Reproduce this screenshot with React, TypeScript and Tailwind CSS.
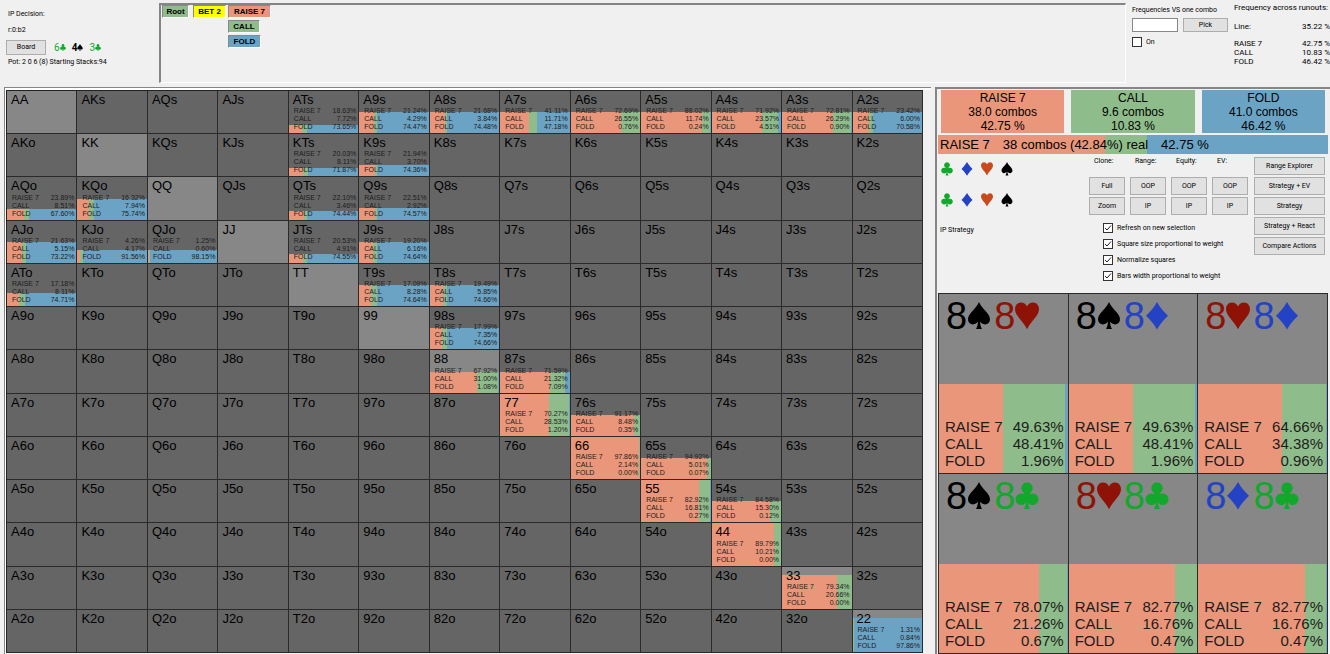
import React, { useState } from 'react';
import clsx from 'clsx';

type Suit = 'club' | 'diamond' | 'heart' | 'spade';

interface Strategy {
  // share of the square that is filled, in percent
  weight: number;
  raise: string;
  call: string;
  fold: string;
}

interface Combo {
  cards: Suit[];
  strategy: Strategy;
}

const RANKS = ['A', 'K', 'Q', 'J', 'T', '9', '8', '7', '6', '5', '4', '3', '2'];

const s = (weight: number, raise: string, call: string, fold: string): Strategy => ({ weight, raise, call, fold });

const STRATEGIES: Record<string, Strategy> = {
  ATs: s(20, '18.63', '7.72', '73.65'),
  A9s: s(50, '21.24', '4.29', '74.47'),
  A8s: s(50, '21.68', '3.84', '74.48'),
  A7s: s(50, '41.11', '11.71', '47.18'),
  A6s: s(50, '72.69', '26.55', '0.76'),
  A5s: s(50, '88.02', '11.74', '0.24'),
  A4s: s(50, '71.92', '23.57', '4.51'),
  A3s: s(50, '72.81', '26.29', '0.90'),
  A2s: s(50, '23.42', '6.00', '70.58'),
  KTs: s(20, '20.03', '8.11', '71.87'),
  K9s: s(28, '21.94', '3.70', '74.36'),
  AQo: s(25, '23.89', '8.51', '67.60'),
  KQo: s(50, '16.32', '7.94', '75.74'),
  QTs: s(20, '22.10', '3.46', '74.44'),
  Q9s: s(28, '22.51', '2.92', '74.57'),
  AJo: s(50, '21.63', '5.15', '73.22'),
  KJo: s(30, '4.26', '4.17', '91.56'),
  QJo: s(30, '1.25', '0.60', '98.15'),
  JTs: s(20, '20.53', '4.91', '74.55'),
  J9s: s(50, '19.20', '6.16', '74.64'),
  ATo: s(30, '17.18', '8.11', '74.71'),
  T9s: s(50, '17.09', '8.28', '74.64'),
  T8s: s(50, '19.49', '5.85', '74.66'),
  '98s': s(50, '17.99', '7.35', '74.66'),
  '88': s(50, '67.92', '31.00', '1.08'),
  '87s': s(50, '71.59', '21.32', '7.09'),
  '77': s(100, '70.27', '28.53', '1.20'),
  '76s': s(50, '91.17', '8.48', '0.35'),
  '66': s(100, '97.86', '2.14', '0.00'),
  '65s': s(50, '94.92', '5.01', '0.07'),
  '55': s(100, '82.92', '16.81', '0.27'),
  '54s': s(50, '84.58', '15.30', '0.12'),
  '44': s(100, '89.79', '10.21', '0.00'),
  '33': s(80, '79.34', '20.66', '0.00'),
  '22': s(80, '1.31', '0.84', '97.86'),
};

const COMBOS: Combo[] = [
  { cards: ['spade', 'heart'], strategy: s(50, '49.63', '48.41', '1.96') },
  { cards: ['spade', 'diamond'], strategy: s(50, '49.63', '48.41', '1.96') },
  { cards: ['heart', 'diamond'], strategy: s(50, '64.66', '34.38', '0.96') },
  { cards: ['spade', 'club'], strategy: s(50, '78.07', '21.26', '0.67') },
  { cards: ['heart', 'club'], strategy: s(50, '82.77', '16.76', '0.47') },
  { cards: ['diamond', 'club'], strategy: s(50, '82.77', '16.76', '0.47') },
];

const ACTIONS = [
  { name: 'RAISE 7', combos: '38.0', freq: '42.75 %', color: 'bg-[#e9967a]' },
  { name: 'CALL', combos: '9.6', freq: '10.83 %', color: 'bg-[#8fbc8b]' },
  { name: 'FOLD', combos: '41.0', freq: '46.42 %', color: 'bg-[#6ba3c4]' },
];

const OPTIONS = [
  'Refresh on new selection',
  'Square size proportional to weight',
  'Normalize squares',
  'Bars width proportional to weight',
];

const CLONE_COLUMNS = [
  { title: 'Clone:', buttons: ['Full', 'Zoom'] },
  { title: 'Range:', buttons: ['OOP', 'IP'] },
  { title: 'Equity:', buttons: ['OOP', 'IP'] },
  { title: 'EV:', buttons: ['OOP', 'IP'] },
];

const SUIT_PATHS: Record<Suit, string> = {
  club: 'M12 0.5a5.6 5.6 0 0 1 4 9.6c-0.6 0.6-1 1.3-1.4 2.2 1-0.6 2-0.9 3.2-0.9a5.8 5.8 0 1 1-4.8 9.2c0.2 2.6 0.8 4.6 2 6.4H9c1.2-1.8 1.8-3.8 2-6.4a5.8 5.8 0 1 1-4.8-9.2c1.2 0 2.2 0.3 3.2 0.9-0.4-0.9-0.8-1.6-1.4-2.2A5.6 5.6 0 0 1 12 0.5z',
  diamond: 'M12 0C14.8 5 18.6 9.6 23 13.8 18.6 18 14.8 22.4 12 27.4 9.2 22.4 5.4 18 1 13.8 5.4 9.6 9.2 5 12 0z',
  heart: 'M12 4.600C13.200 1.800 15.400 0.400 18 0.400c3.600 0 6 2.800 6 6.800 0 6.400-8 11.600-12 20C8 18.800 0 13.600 0 7.200c0-4 2.400-6.800 6-6.800 2.600 0 4.800 1.400 6 4.200z',
  spade: 'M12 0c2.800 7 11 11 11 17.200c0 3-2.200 5.200-5 5.200-2.200 0-3.800-1-5-2.800 0.200 3 0.600 5 2 7.400H9c1.400-2.400 1.800-4.400 2-7.400-1.200 1.800-2.800 2.800-5 2.800-2.800 0-5-2.200-5-5.200C1 11 9.200 7 12 0z',
};

const CARD_COLORS: Record<Suit, string> = {
  club: 'text-[#12a82c]',
  diamond: 'text-[#2343c4]',
  heart: 'text-[#8f1206]',
  spade: 'text-black',
};

const FILTER_COLORS: Record<Suit, string> = {
  ...CARD_COLORS,
  heart: 'text-[#c84a1c]',
};

function SuitIcon({ suit, className }: { readonly suit: Suit; readonly className?: string }) {
  return (
    <svg viewBox="0 0 24 28" className={className} fill="currentColor" aria-hidden="true">
      <path d={SUIT_PATHS[suit]} />
    </svg>
  );
}

function ClassicButton({ children, className }: { readonly children: React.ReactNode; readonly className?: string }) {
  return (
    <button
      type="button"
      className={clsx(
        'border border-[#adadad] bg-[#e1e1e1] text-center whitespace-nowrap hover:border-[#0078d7] hover:bg-[#e5f1fb]',
        className
      )}
    >
      {children}
    </button>
  );
}

function CheckBox({ label, defaultChecked }: { readonly label: string; readonly defaultChecked?: boolean }) {
  return (
    <label className="flex h-4 items-center gap-1">
      <span className="grid h-[10px] w-[10px]">
        <input
          type="checkbox"
          defaultChecked={defaultChecked}
          className="peer col-start-1 row-start-1 h-[10px] w-[10px] appearance-none border border-[#333] bg-white"
        />
        <svg
          viewBox="0 0 10 10"
          className="pointer-events-none invisible col-start-1 row-start-1 h-[10px] w-[10px] peer-checked:visible"
          fill="none"
          stroke="#222"
        >
          <path d="M2 5l2 2 4-4.500" />
        </svg>
      </span>
      {label}
    </label>
  );
}

function StrategyBars({ strategy }: { readonly strategy: Strategy }) {
  return (
    <div className="absolute inset-x-0 bottom-0 flex bg-[#6ba3c4]" style={{ height: `${strategy.weight}%` }}>
      <div className="bg-[#e9967a]" style={{ width: `${strategy.raise}%` }} />
      <div className="bg-[#8fbc8b]" style={{ width: `${strategy.call}%` }} />
    </div>
  );
}

function StrategyText({ strategy, className }: { readonly strategy: Strategy; readonly className: string }) {
  const rows = [
    ['RAISE 7', strategy.raise],
    ['CALL', strategy.call],
    ['FOLD', strategy.fold],
  ];

  return (
    <span className={clsx('relative block', className)}>
      {rows.map(([name, value]) => (
        <span key={name} className="flex justify-between whitespace-nowrap">
          <span>{name}</span>
          <span>{value}%</span>
        </span>
      ))}
    </span>
  );
}

function HandMatrix() {
  const [selected, setSelected] = useState('88');

  return (
    <div className="grid flex-1 grid-cols-[repeat(13,minmax(0,1fr))] grid-rows-[repeat(13,minmax(0,1fr))] border-t border-l border-[#222]">
      {RANKS.map((_, row) =>
        RANKS.map((__, col) => {
          const pair = row === col;
          const suffix = pair ? '' : col > row ? 's' : 'o';
          const hand = RANKS[Math.min(row, col)] + RANKS[Math.max(row, col)] + suffix;
          const strategy = STRATEGIES[hand];

          return (
            <button
              key={hand}
              type="button"
              aria-pressed={selected === hand}
              onClick={() => setSelected(hand)}
              className={clsx(
                'relative flex min-h-0 flex-col justify-between overflow-hidden border-r border-b border-[#2a2a2a] text-left',
                pair ? 'bg-[#878787]' : 'bg-[#656565]'
              )}
            >
              {strategy && <StrategyBars strategy={strategy} />}
              <span className="relative pt-px pl-1 text-[13px] leading-4">{hand}</span>
              {strategy && (
                <StrategyText
                  strategy={strategy}
                  className="-mt-1 w-full pr-[2px] pb-[2px] pl-[5px] text-[7px] leading-[8px] text-[#1c1c1c]"
                />
              )}
            </button>
          );
        })
      )}
    </div>
  );
}

function Header() {
  return (
    <header className="flex h-[87px] shrink-0 pt-[3px]">
      <div className="flex w-[159px] shrink-0 flex-col pt-[3px] pl-2 leading-4">
        <p>IP Decision:</p>
        <p>r:0:b2</p>
        <div className="mt-[2px] -ml-[2px] flex items-center">
          <ClassicButton className="h-[15px] w-[40px] leading-[13px]">Board</ClassicButton>
          <div className="ml-2 flex gap-[6px] text-[10px] leading-[15px]">
            <span className="flex items-center text-[#12a82c]">
              6<SuitIcon suit="club" className="h-[7px] w-[6px]" />
            </span>
            <span className="flex items-center font-bold">
              4<SuitIcon suit="spade" className="h-[7px] w-[6px]" />
            </span>
            <span className="flex items-center text-[#12a82c]">
              3<SuitIcon suit="club" className="h-[7px] w-[6px]" />
            </span>
          </div>
        </div>
        <p className="leading-[14px] whitespace-nowrap">Pot: 2 0 6 (8) Starting Stacks:94</p>
      </div>

      <nav className="mb-1 flex flex-1 items-start border-t-2 border-r border-b border-l-2 border-t-[#858585] border-r-white border-b-white border-l-[#858585] pl-px font-['Liberation_Sans',Arial,sans-serif] text-[8px] leading-[11px] font-bold">
        <button type="button" className="mr-1 w-[27px] border border-t-[#888] border-r-white border-b-white border-l-[#888] bg-[#8fbc8b]">
          Root
        </button>
        <button type="button" className="mr-[2px] w-[33px] border border-t-[#888] border-r-white border-b-white border-l-[#888] bg-[#ffff00] whitespace-nowrap">
          BET 2
        </button>
        <div className="flex flex-col items-start gap-[2px]">
          <button type="button" className="w-[43px] border border-t-[#888] border-r-white border-b-white border-l-[#888] bg-[#e9967a] whitespace-nowrap">
            RAISE 7
          </button>
          <button type="button" className="w-[32px] border border-t-[#888] border-r-white border-b-white border-l-[#888] bg-[#8fbc8b]">
            CALL
          </button>
          <button type="button" className="w-[33px] border border-t-[#888] border-r-white border-b-white border-l-[#888] bg-[#6ba3c4]">
            FOLD
          </button>
        </div>
      </nav>

      <div className="w-[108px] shrink-0 pl-[6px]">
        <label htmlFor="combo" className="block leading-[14px] whitespace-nowrap">
          Frequencies VS one combo
        </label>
        <div className="mt-px mb-[2px] flex gap-[5px]">
          <input id="combo" type="text" className="h-[14px] w-[46px] border border-[#888] bg-white px-px" />
          <ClassicButton className="h-[14px] w-[45px] leading-[12px]">Pick</ClassicButton>
        </div>
        <CheckBox label="On" />
      </div>

      <div className="w-[96px] shrink-0 text-[8px]">
        <table className="w-full border-collapse text-left">
          <caption className="h-[10px] text-left leading-[10px] whitespace-nowrap">Frequency across runouts:</caption>
          <tbody className="leading-[9px]">
            <tr className="h-[26px]">
              <th className="font-normal">Line:</th>
              <td className="text-right">35.22 %</td>
            </tr>
            {ACTIONS.map((action) => (
              <tr key={action.name}>
                <th className="font-normal">{action.name}</th>
                <td className="text-right">{action.freq}</td>
              </tr>
            ))}
          </tbody>
        </table>
      </div>
    </header>
  );
}

function Controls() {
  const suits: Suit[] = ['club', 'diamond', 'heart', 'spade'];
  const tools = ['Range Explorer', 'Strategy + EV', 'Strategy', 'Strategy + React', 'Compare Actions'];

  return (
    <div className="flex h-[138px] shrink-0 pr-[3px]">
      <div className="flex-1 pt-[7px]">
        {[0, 1].map((card) => (
          <div key={card} className="mb-[17px] flex gap-2 pl-[3px]">
            {suits.map((suit) => (
              <button key={suit} type="button" aria-label={suit} className={FILTER_COLORS[suit]}>
                <SuitIcon suit={suit} className="h-[14px] w-[12px]" />
              </button>
            ))}
          </div>
        ))}
        <p className="pl-[2px]">IP Strategy</p>
      </div>

      <div className="mr-[6px]">
        <div className="flex gap-[5px]">
          {CLONE_COLUMNS.map((column) => (
            <div key={column.title} className="flex w-[36px] flex-col gap-[2px]">
              <span className="h-[20px] pl-[5px] leading-[12px]">{column.title}</span>
              {column.buttons.map((name) => (
                <ClassicButton key={name} className="h-[18px]">
                  {name}
                </ClassicButton>
              ))}
            </div>
          ))}
        </div>
        <div className="mt-[5px] pl-[14px]">
          {OPTIONS.map((option) => (
            <CheckBox key={option} label={option} defaultChecked />
          ))}
        </div>
      </div>

      <div className="flex w-[71px] flex-col gap-[2px] pt-[2px]">
        {tools.map((tool) => (
          <ClassicButton key={tool} className="h-[18px]">
            {tool}
          </ClassicButton>
        ))}
      </div>
    </div>
  );
}

function ComboGrid() {
  return (
    <div className="grid flex-1 grid-cols-3 grid-rows-2 border-t border-l border-[#2a2a2a]">
      {COMBOS.map(({ cards, strategy }) => (
        <div
          key={cards.join('-')}
          className="relative flex flex-col justify-between border-r border-b border-[#2a2a2a] bg-[#878787]"
        >
          <StrategyBars strategy={strategy} />
          <div className="relative flex gap-[3px] pt-[5px] pl-[7px] text-[38px] leading-[34px]">
            {cards.map((suit) => (
              <span key={suit} className={clsx('flex items-center', CARD_COLORS[suit])}>
                8<SuitIcon suit={suit} className="h-[28px] w-[24px]" />
              </span>
            ))}
          </div>
          <StrategyText strategy={strategy} className="pr-1 pb-1 pl-[6px] text-[15px] leading-[17px] text-[#1c1c1c]" />
        </div>
      ))}
    </div>
  );
}

function StrategyPanel() {
  return (
    <aside className="flex w-[395px] shrink-0 flex-col border-t-2 border-l-2 border-[#858585] pr-[2px] pl-px">
      <div className="flex gap-[7px] px-[3px] pt-px">
        {ACTIONS.map((action) => (
          <div
            key={action.name}
            className={clsx(
              "flex-1 pt-px font-['Liberation_Sans',Arial,sans-serif] text-center text-[12px] leading-[14px]",
              action.color
            )}
          >
            <p>{action.name}</p>
            <p>{action.combos} combos</p>
            <p>{action.freq}</p>
          </div>
        ))}
      </div>

      <div className="relative mt-[2px] mb-px h-[19px] shrink-0">
        <StrategyBars strategy={s(100, '42.84', '10.83', '46.42')} />
        <p className="relative flex gap-[13px] pl-[2px] font-['Liberation_Sans',Arial,sans-serif] text-[13px] leading-[19px] whitespace-nowrap">
          <span>RAISE 7</span>
          <span>38 combos (42.84%) real</span>
          <span>42.75 %</span>
        </p>
      </div>

      <Controls />
      <div className="flex flex-1 font-['Liberation_Sans',Arial,sans-serif]">
        <ComboGrid />
      </div>
    </aside>
  );
}

export default function App() {
  return (
    <div className="flex h-screen min-h-[640px] flex-col overflow-hidden bg-[#f0f0f0] font-[Roboto,'Liberation_Sans',sans-serif] text-[7px] leading-[12px] text-black">
      <Header />
      <main className="flex min-h-0 flex-1 gap-1 pl-1">
        <section className="flex flex-1 border-t border-l border-[#858585] font-['Liberation_Sans',Arial,sans-serif]">
          <div className="flex flex-1 border-t-2 border-l border-white pr-2 pb-px">
            <HandMatrix />
          </div>
        </section>
        <StrategyPanel />
      </main>
    </div>
  );
}
